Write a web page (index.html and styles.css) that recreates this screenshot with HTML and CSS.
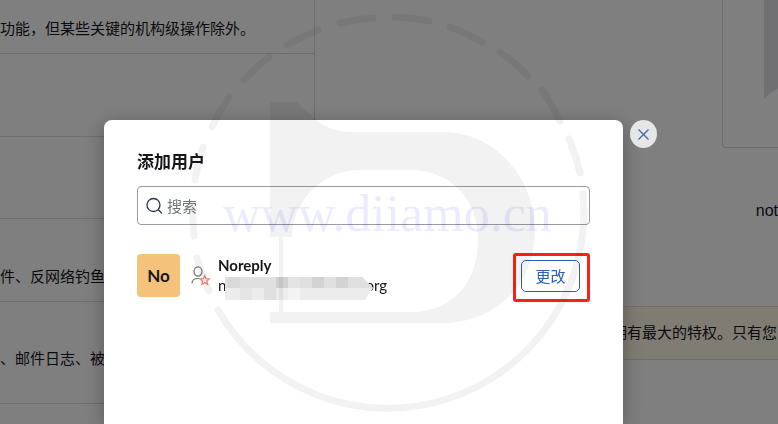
FILE: index.html
```
<!DOCTYPE html>
<html lang="zh-CN">
<head>
    <meta charset="UTF-8">
    <meta name="viewport" content="width=device-width, initial-scale=1.0">
    <title>添加用户</title>
    <link rel="stylesheet" href="styles.css">
</head>
<body>
    <main class="page">
        <ul class="roles">
            <li class="role first">功能，但某些关键的机构级操作除外。</li>
            <li class="role"></li>
            <li class="role short"></li>
            <li class="role">件、反网络钓鱼</li>
            <li class="role tall">、邮件日志、被</li>
        </ul>
        <section class="detail">
            <div class="card">
                <svg class="ribbon" viewBox="0 0 14 99" aria-hidden="true">
                    <path d="M0 0H14V89Q6 92 0 99Z" fill="#e0e0e4"/>
                </svg>
            </div>
            <p class="address">not</p>
            <p class="notice">拥有最大的特权。只有您</p>
        </section>
    </main>

    <div class="overlay">
        <div class="modal" role="dialog" aria-labelledby="modal-title">
            <h2 id="modal-title">添加用户</h2>
            <label class="search">
                <svg width="18" height="18" viewBox="0 0 18 18" fill="none" stroke="#27344a" stroke-width="1.3" stroke-linecap="round" aria-hidden="true">
                    <circle cx="7.5" cy="8" r="6.5"/>
                    <path d="M12.3 12.8L15.5 16"/>
                </svg>
                <input type="text" placeholder="搜索" aria-label="搜索">
            </label>
            <div class="user">
                <div class="avatar">No</div>
                <svg class="user-icon" width="20" height="20" viewBox="0 0 20 20" fill="none" aria-hidden="true">
                    <ellipse cx="7" cy="5.5" rx="4" ry="4.7" stroke="#777" stroke-width="1.2"/>
                    <path d="M1 17.5C1 14.5 3 12.5 7 12.5H8.5" stroke="#777" stroke-width="1.2"/>
                    <path d="M13.7 9.6L15 12.7L18.3 13L15.8 15.1L16.6 18.3L13.7 16.6L10.8 18.3L11.6 15.1L9.1 13L12.4 12.7Z" fill="#fff" stroke="#f58a7c" stroke-width="1.3"/>
                </svg>
                <div class="user-info">
                    <strong>Noreply</strong>
                    <div class="email">
                        <span>n</span><span>org</span>
                        <svg class="mosaic" width="148" height="23" viewBox="0 0 148 23" aria-hidden="true">
                            <path d="M0 0H137L148 11L140 23H0Z" fill="#ececec"/>
                            <path d="M0 0H137L148 11H0Z" fill="#e0e0e0"/>
                            <path d="M3 0H15V11H3Z" fill="#dadada"/>
                            <path d="M51 0H63V11H51Z" fill="#d0d0d0"/>
                            <path d="M63 0H75V11H63Z" fill="#e4e4e4"/>
                            <path d="M87 0H99V11H87Z" fill="#d2d2d2"/>
                            <path d="M111 0H123V11H111Z" fill="#d3d3d3"/>
                            <path d="M15 11H27V23H15Z" fill="#e5e5e5"/>
                            <path d="M39 11H51V23H39Z" fill="#e0e0e0"/>
                            <path d="M63 11H75V23H63Z" fill="#f3f3f3"/>
                        </svg>
                    </div>
                </div>
                <span class="highlight">
                    <button type="button" class="change">更改</button>
                </span>
            </div>
        </div>
        <button type="button" class="close" aria-label="关闭">
            <svg width="13" height="13" viewBox="0 0 13 13" fill="none" stroke="#4068b0" stroke-width="1.3" aria-hidden="true">
                <path d="M1.5 1.5L11.5 11.5M11.5 1.5L1.5 11.5"/>
            </svg>
        </button>
    </div>

    <svg class="watermark" viewBox="0 0 778 424" aria-hidden="true">
        <g class="watermark-logo">
            <path class="ring" d="M569 139A196 196 0 0 1 580 173M542 90A196 196 0 0 1 560 121M500 52A196 196 0 0 1 528 76M450 27A196 196 0 0 1 482 42M395 17A196 196 0 0 1 429 21M340 23A196 196 0 0 1 373 18M287 45A196 196 0 0 1 318 30M244 80A196 196 0 0 1 269 57M212 127A196 196 0 0 1 229 97M195 180A196 196 0 0 1 203 147M194 236A196 196 0 0 1 193 204M197 258A196 196 0 0 0 209 291"/>
            <path class="ring" d="M218 310A196 196 0 0 0 583 194"/>
            <path d="M270 102H297L313 117Q328 132 353 132H443C497 132 535 180 535 230C535 285 495 323 443 323H270V312H410C455 312 478 280 478 240C478 198 450 170 410 170H357C320 172 292 203 292 237H283V312H279V237H270Z"/>
        </g>
        <text x="223" y="231">www.diiamo.cn</text>
    </svg>
</body>
</html>
```

FILE: styles.css
```
* {
    box-sizing: border-box;
}
body {
    margin: 0;
    height: 100vh;
    overflow: hidden;
    font-family: Lato, "Noto Sans CJK SC", sans-serif;
    font-size: 15px;
    line-height: 20px;
    color: #16161d;
    background-color: #fff;
}
p, h2, ul {
    margin: 0;
    padding: 0;
}
.page {
    display: grid;
    grid-template-columns: 315px 1fr;
    height: 100%;
}
.roles {
    list-style: none;
    border-right: 1px solid #dcdcdc;
}
.role {
    display: flex;
    align-items: flex-end;
    height: 83px;
    padding-bottom: 15px;
    border-bottom: 1px solid #dcdcdc;
    white-space: nowrap;
}
.role.first {
    height: 54px;
}
.role.short {
    height: 82px;
}
.role.tall {
    height: 102px;
    padding-bottom: 35px;
}
.detail {
    display: flex;
    flex-direction: column;
    align-items: flex-end;
    overflow: hidden;
}
.card {
    width: 56px;
    height: 148px;
    padding-left: 41px;
    border: 1px solid #d8d8d8;
    border-width: 0 0 1px 1px;
    border-bottom-left-radius: 4px;
}
.ribbon {
    display: block;
    width: 100%;
}
.address {
    margin-top: 53px;
    font-family: "Liberation Sans", sans-serif;
    font-size: 16px;
}
.notice {
    width: 200px;
    margin-top: 85px;
    padding: 15px 0 17px 33px;
    border: 1px solid #f0dcb0;
    border-right: none;
    background-color: #fff9e8;
    white-space: nowrap;
}
.overlay {
    position: fixed;
    inset: 0;
    display: flex;
    align-items: flex-start;
    gap: 7px;
    padding: 120px 121px 0 104px;
    background-color: rgba(0, 0, 0, 0.5);
}
.modal {
    flex: 1;
    align-self: stretch;
    padding: 32px 33px;
    border-radius: 8px 8px 0 0;
    background-color: #fff;
    box-shadow: 0 4px 20px rgba(0, 0, 0, 0.3);
}
.modal h2 {
    font-size: 17px;
    line-height: 20px;
}
.search {
    display: flex;
    align-items: center;
    gap: 3px;
    height: 39px;
    margin-top: 14px;
    padding: 0 8px;
    border: 1px solid #9a9aa2;
    border-radius: 4px;
}
.search input {
    flex: 1;
    min-width: 0;
    padding: 0;
    border: none;
    outline: none;
    background: none;
    font: inherit;
}
.search input::placeholder {
    color: #70757a;
}
.user {
    display: flex;
    align-items: center;
    margin-top: 29px;
}
.avatar {
    width: 43px;
    height: 43px;
    border-radius: 4px;
    background-color: #f5c27b;
    font-size: 17px;
    font-weight: bold;
    line-height: 43px;
    text-align: center;
}
.user-icon {
    margin: 0 7px 0 11px;
}
.user-info {
    flex: 1;
    padding-bottom: 2px;
}
.user-info strong {
    display: block;
}
.email {
    position: relative;
    display: flex;
    justify-content: space-between;
    width: 169px;
}
.mosaic {
    position: absolute;
    top: 2px;
    left: 7px;
}
.highlight {
    position: relative;
    margin-right: 10px;
}
/* red frame around the button */
.highlight::after {
    content: "";
    position: absolute;
    inset: -7px -10px -10px -8px;
    border: 3px solid #ff2015;
    border-radius: 3px;
    pointer-events: none;
}
.change {
    display: block;
    width: 59px;
    height: 32px;
    padding: 0;
    border: 1px solid #2b5fb8;
    border-radius: 5px;
    background: none;
    color: #2b5fb8;
    font: inherit;
    cursor: pointer;
}
.close {
    display: flex;
    align-items: center;
    justify-content: center;
    width: 27px;
    height: 28px;
    padding: 0;
    border: none;
    border-radius: 50%;
    background-color: #e6e6e6;
    cursor: pointer;
}
.watermark {
    position: fixed;
    inset: 0;
    width: 100%;
    height: 100%;
    pointer-events: none;
}
.watermark-logo {
    opacity: 0.05;
}
.ring {
    fill: none;
    stroke: #000;
    stroke-width: 7;
    stroke-linecap: round;
}
.watermark text {
    fill: #00f;
    fill-opacity: 0.08;
    font-family: "Liberation Serif", serif;
    font-size: 52px;
}
```
